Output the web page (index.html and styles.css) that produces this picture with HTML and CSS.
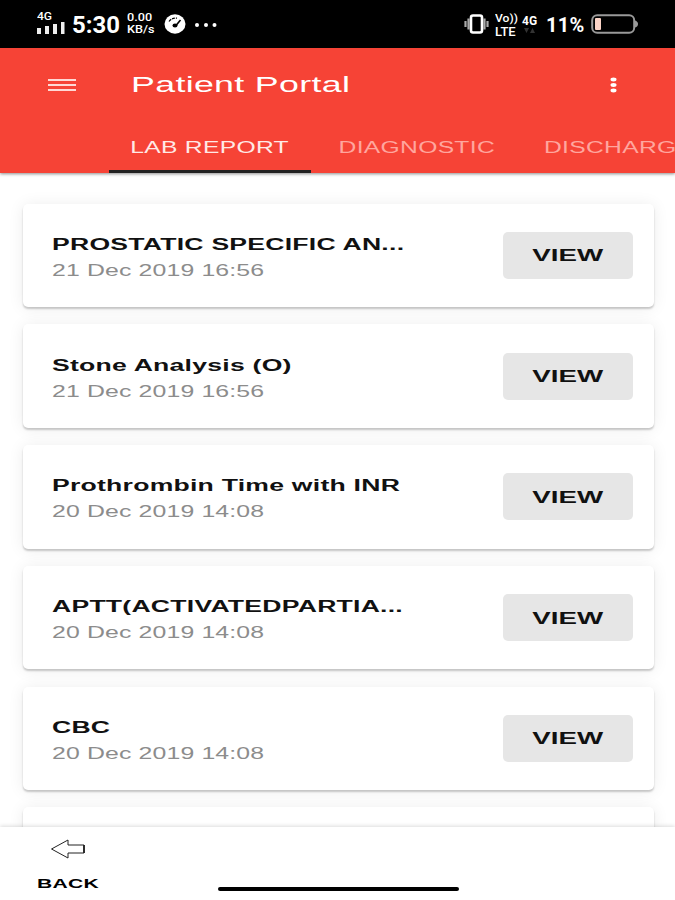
FILE: index.html
```
<!DOCTYPE html>
<html lang="en">
<head>
    <meta charset="UTF-8">
    <meta name="viewport" content="width=device-width, initial-scale=1.0">
    <title>Patient Portal</title>
    <link rel="stylesheet" href="styles.css">
</head>
<body>
    <div class="app">
        <div class="status">
            <div class="signal">
                <span class="net">4G</span>
                <svg width="28" height="12" viewBox="0 0 28 12" fill="#eee">
                    <rect x="0" y="6" width="4" height="6"/>
                    <rect x="8" y="4" width="4" height="8"/>
                    <rect x="16" y="2" width="4" height="10"/>
                    <rect x="24" y="0" width="3.5" height="12"/>
                </svg>
            </div>
            <span class="clock">5:30</span>
            <div class="speed"><span>0.00</span><span>KB/s</span></div>
            <svg class="gauge" width="22" height="20" viewBox="0 0 22 20">
                <ellipse cx="11" cy="10" rx="10.5" ry="9.7" fill="#fff"/>
                <path d="M5 7.5Q8 3.5 13 4.2" fill="none" stroke="#000" stroke-width="1.2" stroke-dasharray="3 1"/>
                <path d="M16.5 6L12 11.5" fill="none" stroke="#000" stroke-width="1.6"/>
                <ellipse cx="11" cy="11.5" rx="2.5" ry="2" fill="#000"/>
            </svg>
            <svg class="more" width="24" height="4" viewBox="0 0 24 4" fill="#fff">
                <circle cx="3" cy="2" r="2"/>
                <circle cx="12" cy="2" r="2"/>
                <circle cx="20.5" cy="2" r="2"/>
            </svg>
            <svg class="vibrate" width="25" height="20" viewBox="0 0 25 20">
                <path d="M1.5 7v6M4.5 4.5v11M20.5 4.5v11M23.5 7v6" stroke="#aaa" stroke-width="2.2"/>
                <rect x="7" y="1.5" width="11" height="17" rx="2" fill="#000" stroke="#fff" stroke-width="2.6"/>
            </svg>
            <div class="volte"><span class="vo">Vo))</span><span class="lte">LTE</span></div>
            <div class="data">
                <span>4G</span>
                <svg width="11" height="5" viewBox="0 0 11 5" fill="#333"><path d="M0 0h5L2.500 5zM6 5h5L8.500 0z"/></svg>
            </div>
            <span class="percent">11%</span>
            <svg class="battery" width="47" height="20" viewBox="0 0 47 20">
                <rect x="1.200" y="1.200" width="42" height="17.600" rx="5" fill="none" stroke="#999" stroke-width="2"/>
                <path d="M44 6.500q3 1 3 3.500t-3 3.500z" fill="#999"/>
                <rect x="4" y="4" width="6" height="12" rx="1" fill="#fbd3c6"/>
            </svg>
        </div>

        <header class="header">
            <div class="toolbar">
                <svg class="menu" width="28" height="14" viewBox="0 0 28 14" stroke="#ffd9d5" stroke-width="2"><path d="M0 2h28M0 7h28M0 12h28"/></svg>
                <h1>Patient Portal</h1>
                <svg class="dots" width="8" height="16" viewBox="0 0 8 16" fill="#fff">
                    <ellipse cx="3.500" cy="2.500" rx="3" ry="1.900"/>
                    <ellipse cx="3.500" cy="8" rx="3" ry="1.900"/>
                    <ellipse cx="3.500" cy="13.500" rx="3" ry="1.900"/>
                </svg>
            </div>
            <nav class="tabs">
                <div class="tab active"><span>LAB REPORT</span></div>
                <div class="tab"><span>DIAGNOSTIC</span></div>
                <div class="tab last"><span>DISCHARGE</span></div>
            </nav>
        </header>

        <main class="list">
            <div class="card">
                <div class="info"><h2>PROSTATIC SPECIFIC AN...</h2><p>21 Dec 2019 16:56</p></div>
                <button><span>VIEW</span></button>
            </div>
            <div class="card">
                <div class="info"><h2>Stone Analysis (O)</h2><p>21 Dec 2019 16:56</p></div>
                <button><span>VIEW</span></button>
            </div>
            <div class="card">
                <div class="info"><h2>Prothrombin Time with INR</h2><p>20 Dec 2019 14:08</p></div>
                <button><span>VIEW</span></button>
            </div>
            <div class="card">
                <div class="info"><h2>APTT(ACTIVATEDPARTIA...</h2><p>20 Dec 2019 14:08</p></div>
                <button><span>VIEW</span></button>
            </div>
            <div class="card">
                <div class="info"><h2>CBC</h2><p>20 Dec 2019 14:08</p></div>
                <button><span>VIEW</span></button>
            </div>
            <div class="card"></div>
        </main>

        <footer class="footer">
            <div class="back">
                <svg width="36" height="20" viewBox="0 0 36 20" fill="none" stroke="#222" stroke-width="1"><path d="M1.500 10L18 1v5h16v8H18v5z"/><path d="M34 6v8" stroke-width="1.800"/></svg>
                <span>BACK</span>
            </div>
            <div class="home"></div>
        </footer>
    </div>
</body>
</html>
```
FILE: styles.css
```
* {
    box-sizing: border-box;
}
body {
    margin: 0;
    font-family: "Liberation Sans", Arial, sans-serif;
    background: #fff;
}
h1, h2, p {
    margin: 0;
}
svg {
    display: block;
    flex: none;
}
.app {
    display: flex;
    flex-direction: column;
    width: 675px;
    height: 900px;
    overflow: hidden;
}

/* phone status bar */
.status {
    display: flex;
    align-items: center;
    flex: none;
    height: 48px;
    padding: 0 37px;
    background: #000;
    color: #fff;
    font-family: Roboto, sans-serif;
    white-space: nowrap;
}
.signal {
    width: 28px;
    margin-top: -3px;
}
.net {
    display: block;
    height: 10px;
    font-size: 10.5px;
    line-height: 10px;
    font-weight: 500;
    transform: scaleX(1.15);
    transform-origin: left;
}
.clock {
    width: 47px;
    margin-left: 7px;
    margin-top: 2px;
    font-size: 23px;
    font-weight: 700;
    transform: scaleX(1.04);
    transform-origin: left;
}
.speed {
    display: flex;
    flex-direction: column;
    width: 26px;
    margin-left: 8px;
    font-size: 11px;
    line-height: 12px;
    font-weight: 500;
    transform: scaleX(1.15);
    transform-origin: left;
}
.gauge {
    margin-left: 11px;
}
.more {
    margin: 1px 0 0 8px;
}
.vibrate {
    margin-left: auto;
}
.volte {
    display: flex;
    flex-direction: column;
    width: 23px;
    margin: 1px 0 0 6px;
}
.vo {
    font-size: 11px;
    line-height: 13px;
    font-weight: 500;
    transform: scaleX(1.1);
    transform-origin: left;
}
.lte {
    font-size: 13px;
    line-height: 13px;
    font-weight: 500;
}
.data {
    width: 16px;
    margin-left: 4px;
    font-size: 12px;
    line-height: 12px;
    font-weight: 700;
}
.data svg {
    margin: 1px 0 0 2px;
}
.percent {
    width: 38px;
    margin-left: 8px;
    margin-top: 2px;
    font-size: 20px;
    font-weight: 700;
    letter-spacing: 0.3px;
}
.battery {
    margin-left: 7px;
}

/* header */
.header {
    position: relative;
    flex: none;
    height: 125px;
    background: #f64336;
    box-shadow: 0 1px 3px rgba(0, 0, 0, 0.45);
    color: #fff;
}
.toolbar {
    display: flex;
    align-items: center;
    height: 74px;
    padding: 0 57px 0 48px;
}
.toolbar h1 {
    margin-left: 54.5px;
    font-size: 22px;
    font-weight: 400;
    letter-spacing: 0.2px;
    transform: scaleX(1.625);
    transform-origin: left;
}
.dots {
    margin-left: auto;
}
.tabs {
    display: flex;
    height: 51px;
    padding-left: 109px;
    overflow: hidden;
}
.tab {
    display: flex;
    justify-content: center;
    flex: none;
    width: 202px;
    padding-top: 15.5px;
    font-size: 16px;
    line-height: 19px;
    color: #ffa69e;
}
.tab + .tab {
    width: 212px;
}
.tab.last {
    justify-content: flex-start;
    padding-left: 21px;
}
.tab span {
    display: block;
    height: 19px;
    letter-spacing: 0.2px;
    transform: scaleX(1.54);
}
.tab.last span {
    transform-origin: left;
}
.tab.active {
    border-bottom: 3px solid #222;
    color: #ffe9e6;
}

/* report list */
.list {
    flex: 1;
    min-height: 0;
    padding: 30.5px 21px 0 22.5px;
    overflow: hidden;
}
.card {
    display: flex;
    justify-content: space-between;
    align-items: center;
    height: 103.5px;
    margin-bottom: 17.3px;
    padding: 0 21px 0 29px;
    border-radius: 5px;
    background: #fff;
    box-shadow: 0 2px 2px rgba(0, 0, 0, 0.2), 0 1px 16px rgba(0, 0, 0, 0.08);
}
.info {
    padding-top: 5px;
    white-space: nowrap;
}
.info h2 {
    font-size: 16px;
    line-height: 26px;
    letter-spacing: 0.15px;
    color: #111;
    transform: scaleX(1.66);
    transform-origin: left;
}
.info p {
    font-size: 16px;
    line-height: 26px;
    letter-spacing: 0.1px;
    color: #8c8c8c;
    transform: scaleX(1.55);
    transform-origin: left;
}
.card button {
    width: 130px;
    height: 47px;
    padding: 2px 0 0;
    border: none;
    border-radius: 5px;
    background: #e6e6e6;
    color: #111;
    font: bold 17px "Liberation Sans", Arial, sans-serif;
}
.card button span {
    display: inline-block;
    transform: scaleX(1.63);
}

/* bottom bar */
.footer {
    position: relative;
    display: flex;
    flex: none;
    height: 73px;
    padding: 12px 0 0 37px;
    background: #fff;
    box-shadow: 0 -1px 4px rgba(0, 0, 0, 0.14);
}
.back {
    width: 60px;
}
.back svg {
    margin-left: 13px;
}
.back span {
    display: block;
    margin-top: 17px;
    font-size: 13px;
    font-weight: bold;
    line-height: 16px;
    letter-spacing: 0.2px;
    transform: scaleX(1.62);
    transform-origin: left;
}
.home {
    width: 241px;
    height: 4px;
    margin: 48px 0 0 121px;
    border-radius: 2px;
    background: #000;
}
```
